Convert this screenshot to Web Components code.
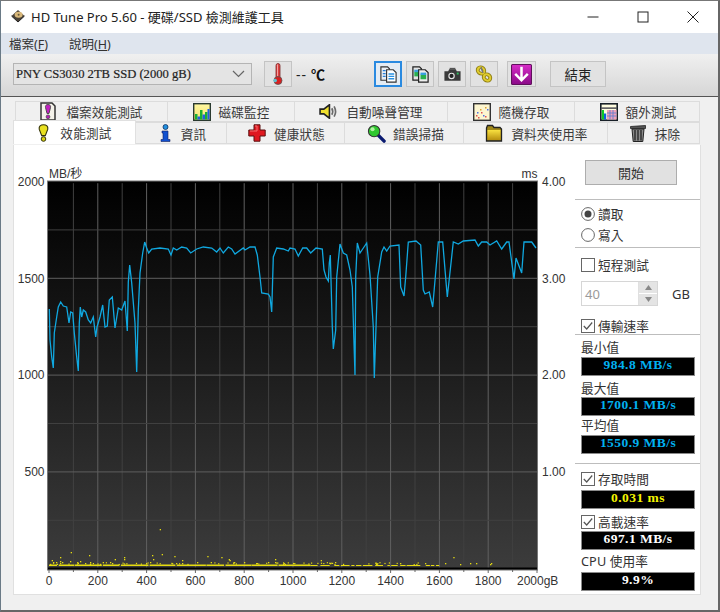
<!DOCTYPE html>
<html lang="zh-Hant"><head><meta charset="utf-8"><title>HD Tune Pro</title>
<style>
html,body{margin:0;padding:0;width:720px;height:612px;overflow:hidden;background:#fff}
body{font:12.5px "Noto Sans","Noto Sans CJK TC",sans-serif;color:#333}
</style></head><body>
<ht-app></ht-app>
<script>
const CJK='"Noto Sans","Noto Sans CJK TC",sans-serif';
const ICONS={
disk:`<svg viewBox="0 0 14 14"><path d="M7 1 13.500 7 7 13 .5 7Z" fill="#4a4238"/><ellipse cx="7.600" cy="5.800" rx="4" ry="3" fill="#d9b87a"/><circle cx="7.600" cy="5.800" r="1" fill="#6b5a3a"/><path d="M.5 7 7 13l6.500-6" fill="none" stroke="#222"/></svg>`,
thermo:`<svg viewBox="0 0 18 24"><rect x="7" y="1.500" width="4" height="15" rx="2" fill="#e04040" stroke="#7a2a2a" stroke-width=".8"/><rect x="8" y="2.500" width="1" height="12" fill="#f4a0a0"/><circle cx="9" cy="18.500" r="4" fill="#d82020" stroke="#555" stroke-width=".8"/><circle cx="6.200" cy="18.500" r="1.800" fill="#60c0d0"/></svg>`,
docs1:`<svg viewBox="0 0 20 20"><path d="M2 2h7l2 2v12H2Z" fill="#e8eef4" stroke="#333" stroke-width="1.200"/><path d="M8 5h7l3 3v10H8Z" fill="#fff" stroke="#333" stroke-width="1.200"/><path d="M4 6h3M4 9h3M4 12h3" stroke="#2a80d8" stroke-width="1.400"/><path d="M10 9.500h6M10 12h6M10 14.500h6" stroke="#2a90e0" stroke-width="1.400"/></svg>`,
docs2:`<svg viewBox="0 0 20 20"><path d="M2 2h7l2 2v12H2Z" fill="#e4e4e4" stroke="#222" stroke-width="1.300"/><path d="M8 5h7l3 3v10H8Z" fill="#eee" stroke="#222" stroke-width="1.300"/><rect x="3.500" y="7" width="4" height="5" fill="#2ab050"/><rect x="3.500" y="5" width="4" height="2.500" fill="#38a0e0"/><rect x="10" y="10" width="6" height="5" fill="#2ab050"/><rect x="10" y="8" width="6" height="2.500" fill="#38a0e0"/></svg>`,
camera:`<svg viewBox="0 0 20 20"><path d="M1.500 6.500h4l1-2h7l1 2h4v10h-17Z" fill="#3a3a3a"/><rect x="7" y="3" width="6" height="2" fill="#555"/><circle cx="9" cy="11.500" r="3.400" fill="#e8e8e8"/><circle cx="9" cy="11.500" r="2.200" fill="#222"/><rect x="14.500" y="8" width="2" height="2" fill="#30c060"/></svg>`,
chain:`<svg viewBox="0 0 20 20"><g fill="none" stroke="#8a7a10" stroke-width="3.800"><ellipse cx="7" cy="6.500" rx="3.500" ry="3" transform="rotate(40 7 6.500)"/><ellipse cx="13" cy="13.500" rx="3.500" ry="3" transform="rotate(40 13 13.500)"/></g><g fill="none" stroke="#e0cc30" stroke-width="2"><ellipse cx="7" cy="6.500" rx="3.500" ry="3" transform="rotate(40 7 6.500)"/><ellipse cx="13" cy="13.500" rx="3.500" ry="3" transform="rotate(40 13 13.500)"/></g><path d="M7 3 9 9" stroke="#777" stroke-width="1.500"/></svg>`,
down:`<svg viewBox="0 0 20 20"><defs><linearGradient id="m" x1="0" y1="0" x2="0" y2="1"><stop offset="0" stop-color="#d82cc8"/><stop offset="1" stop-color="#8a0a88"/></linearGradient></defs><rect x=".5" y=".5" width="19" height="19" rx="1" fill="url(#m)" stroke="#60105c"/><path d="M10 2.500v13M4 9.500 10 15.500 16 9.500" fill="none" stroke="#fff" stroke-width="2.400"/></svg>`,
filex:`<svg viewBox="0 0 16 19"><path d="M1 1h11l3 3v14H1Z" fill="#f4f2ea" stroke="#333" stroke-width="1.500"/><path d="M8 2.500c2.200 0 2.800 1.500 2.500 3L9 11.500H7L5.500 5.500C5.200 4 5.800 2.500 8 2.500Z" fill="#c020c0" stroke="#444" stroke-width=".9"/><circle cx="8" cy="14.800" r="1.900" fill="#b020b0" stroke="#444" stroke-width=".7"/></svg>`,
chart:`<svg viewBox="0 0 18 18"><defs><linearGradient id="c" x1="0" y1="0" x2="0" y2="1"><stop offset="0" stop-color="#fff8a0"/><stop offset="1" stop-color="#f4e070"/></linearGradient></defs><rect x=".7" y=".7" width="16.600" height="16.600" fill="url(#c)" stroke="#2a3a30" stroke-width="1.400"/><path d="M2 16.500V11h2.500v5.500Zm5 0V7h2.500v9.500Zm5 0V9h2.500v7.500Z" fill="#18b030"/><path d="M4.500 16.500v-3H7v3Zm5 0v-5H12v5Zm5 0V6H16.500v10.500Z" fill="#2060e0"/></svg>`,
speaker:`<svg viewBox="0 0 20 16"><path d="M1 5.500h4L11 .8v14.400L5 10.500H1Z" fill="#f0e030" stroke="#222" stroke-width="1.700"/><path d="M13.500 4.500q2 3.500 0 7M16 2.500q3 5.500 0 11" fill="none" stroke="#6a6a6a" stroke-width="1.800"/></svg>`,
random:`<svg viewBox="0 0 18 18"><rect x=".7" y=".7" width="16.600" height="16.600" fill="#fdf6d0" stroke="#333" stroke-width="1.400"/><g fill="#e05050"><rect x="3" y="12" width="1.500" height="1.500"/><rect x="8" y="9" width="1.500" height="1.500"/><rect x="12" y="13" width="1.500" height="1.500"/><rect x="5" y="14" width="1.500" height="1.500"/></g><g fill="#5070e0"><rect x="4" y="9" width="1.500" height="1.500"/><rect x="10" y="12" width="1.500" height="1.500"/><rect x="14" y="6" width="1.500" height="1.500"/></g><g fill="#e0a030"><rect x="12" y="4" width="1.500" height="1.500"/><rect x="7" y="6" width="1.500" height="1.500"/></g></svg>`,
extra:`<svg viewBox="0 0 18 18"><rect x=".8" y=".8" width="16.400" height="16.400" fill="#fffde0" stroke="#182028" stroke-width="1.600"/><rect x="1.500" y="4.500" width="15" height="1.200" fill="#223"/><rect x="1.800" y="7" width="2.200" height="9.500" fill="#10c828"/><rect x="4" y="10.500" width="2.200" height="6" fill="#1060e0"/><rect x="7" y="7" width="9.500" height="9.500" fill="#f0a0b8"/><path d="M7 10h9.500M7 13h9.500M10 7v9.500M13 7v9.500" stroke="#6080d0" stroke-width=".9"/></svg>`,
excl:`<svg viewBox="0 0 11 18"><path d="M5.500 .8c3 0 4.700 1.700 4.300 4.400L7.300 11.600H3.700L1.200 5.200C.8 2.500 2.500.8 5.500.8Z" fill="#e8e020" stroke="#33330a" stroke-width="1.100"/><circle cx="5.500" cy="15" r="2.300" fill="#d8d010" stroke="#33330a"/></svg>`,
info:`<svg viewBox="0 0 11 18"><circle cx="5.500" cy="3" r="2.500" fill="#2090e0" stroke="#103060" stroke-width=".8"/><path d="M2 7h6v8.500h2V17.500H1V15.500h2V9H2Z" fill="#1050d0" stroke="#102060" stroke-width=".6"/></svg>`,
cross:`<svg viewBox="0 0 18 18"><path d="M6 .8h6v5.200h5.200v6H12v5.200H6V12H.8V6H6Z" fill="#e01820" stroke="#5a1010"/><path d="M7 2h2v5H2" fill="none" stroke="#f47070"/></svg>`,
search:`<svg viewBox="0 0 20 20"><path d="M12 12 18 18" stroke="#0a1a70" stroke-width="3.600" stroke-linecap="round"/><circle cx="7.500" cy="7.500" r="6" fill="#30c830" stroke="#333" stroke-width="1.100"/><circle cx="5.800" cy="5.500" r="2.200" fill="#b0f0a0"/></svg>`,
folder:`<svg viewBox="0 0 18 18"><defs><linearGradient id="f" x1="0" y1="0" x2="0" y2="1"><stop offset="0" stop-color="#f8e040"/><stop offset="1" stop-color="#b89010"/></linearGradient></defs><path d="M1.500 4 2.500 1.500h5L9 3.500h6l1.500 1.500v12H1.500Z" fill="#a08818" stroke="#222" stroke-width="1.300"/><rect x="2.500" y="6" width="13" height="10" fill="url(#f)"/></svg>`,
trash:`<svg viewBox="0 0 18 18"><path d="M1.500 2.500 16.500 1.500V4.500H1.500Z" fill="#555" stroke="#222" stroke-width=".8"/><path d="M3 5h12l-1.200 12.500H4.200Z" fill="#8a8a8a" stroke="#222"/><path d="M6 6v10.500M9 6v10.500M12 6v10.500" stroke="#222" stroke-width="1.300"/></svg>`
};
function def(name,css,html,extra){
  const t=document.createElement('template');
  t.innerHTML=`<style>${css}</style>${html}`;
  customElements.define(name,class extends HTMLElement{
    connectedCallback(){
      if(this.shadowRoot)return;
      const r=this.attachShadow({mode:'open'});
      r.appendChild(t.content.cloneNode(true));
      if(extra)extra.call(this,r);
    }
  });
}
def('ht-icon',':host{display:inline-flex;flex:none}svg{display:block;width:100%;height:100%}','<span style="display:contents"></span>',function(r){
  r.querySelector('span').innerHTML=ICONS[this.getAttribute('name')]||'';
  const w=this.getAttribute('w')||16,h=this.getAttribute('h')||w;
  this.style.width=w+'px';this.style.height=h+'px';
});
def('ht-titlebar',`:host{display:flex;align-items:center;height:33px;background:#fff;flex:none;box-sizing:border-box;padding-left:10px;font:13px ${CJK};color:#222}
 .t{margin:0 0 2px 6px;white-space:nowrap}.s{flex:1}.b{width:50px;height:32px;display:flex;align-items:center;justify-content:center}svg{width:12px;height:12px;display:block}
 ht-icon{margin-bottom:2px}`,
 `<ht-icon name="disk" w="14"></ht-icon><span class="t">HD Tune Pro 5.60 - 硬碟/SSD 檢測維護工具</span><span class="s"></span>
 <span class="b"><svg viewBox="0 0 12 12"><path d="M.5 6h11" stroke="#222" fill="none"/></svg></span>
 <span class="b"><svg viewBox="0 0 12 12"><rect x="1" y="1" width="10" height="10" stroke="#222" fill="none"/></svg></span>
 <span class="b"><svg viewBox="0 0 12 12"><path d="M.5.500 11.500 11.500M11.500.500 .5 11.500" stroke="#222" fill="none"/></svg></span>`);
def('ht-menubar',`:host{display:flex;height:21px;background:#dfe5ee;flex:none;align-items:center;padding-left:8px;gap:21px;font:12.500px ${CJK};color:#333}u{text-decoration:underline}`,
 `<span>檔案(<u>F</u>)</span><span>說明(<u>H</u>)</span>`);
def('ht-tool',`:host{display:flex;flex:none;align-items:center;justify-content:center;box-sizing:border-box;height:26px;width:28px;border:1.500px solid #c4c4c4;background:#e2e2e2;font:13.500px ${CJK};color:#222}
 :host([on]){border:2px solid #2a8ae0;background:#e4ecf4}`,'<slot></slot>');
def('ht-combo',`:host{display:flex;flex:none;align-items:center;box-sizing:border-box;width:239px;height:22px;border:1px solid #b4b4b4;background:#e4e4e4;padding-left:2px;font:12.600px "Liberation Serif",serif;color:#222;-webkit-text-stroke:.2px #222}
 .s{flex:1;white-space:nowrap}svg{width:13px;height:8px;margin-right:6px}`,
 `<span class="s">PNY CS3030 2TB SSD (2000 gB)</span><svg viewBox="0 0 13 8"><path d="M1 1l5.500 5.500L12 1" fill="none" stroke="#666" stroke-width="1.200"/></svg>`);
def('ht-toolbar',`:host{display:flex;align-items:center;height:43px;flex:none;box-sizing:border-box;padding:0 0 2px 12px;background:linear-gradient(#f0f0f0,#d6d6d6);border-bottom:1px solid #555;font:13px ${CJK};color:#222}
 .temp{display:flex;align-items:center;flex:none;width:82px;box-sizing:border-box;padding-left:4px;white-space:nowrap}.m{letter-spacing:1px;font-size:14px}.c{font:bold 14px "Noto Sans CJK TC",sans-serif;margin-left:4px;color:#111}`,
 `<ht-combo></ht-combo><ht-tool style="margin-left:12px"><ht-icon name="thermo" w="18" h="24"></ht-icon></ht-tool><span class="temp"><span class="m">--</span><span class="c">℃</span></span>
 <ht-tool on><ht-icon name="docs1" w="19"></ht-icon></ht-tool>
 <ht-tool style="margin-left:4px"><ht-icon name="docs2" w="19"></ht-icon></ht-tool>
 <ht-tool style="margin-left:4px"><ht-icon name="camera" w="19"></ht-icon></ht-tool>
 <ht-tool style="margin-left:4px"><ht-icon name="chain" w="20"></ht-icon></ht-tool>
 <ht-tool style="margin-left:9px;width:29px"><ht-icon name="down" w="21"></ht-icon></ht-tool>
 <ht-tool style="margin-left:14px;width:56px">結束</ht-tool>`);
def('ht-tab',`:host{display:flex;flex:none;align-items:center;justify-content:center;gap:var(--g,8px);box-sizing:border-box;height:100%;border:1px solid #dcdcdc;border-left:0;background:#f0f0f0;color:#3a3a3a;font:12.600px ${CJK};letter-spacing:.1px;white-space:nowrap}
 :host([active]){background:#fff;border:1px solid #e0e0e0;border-bottom:0;height:24px;align-self:flex-end;z-index:1;letter-spacing:.25px}`,'<slot name="icon"></slot><slot></slot>');
def('ht-tabs',`:host{display:block;flex:none;background:#f0f0f0;padding-top:4px;height:48px;box-sizing:border-box;padding-left:14px;overflow:visible;position:relative}
 .r{display:flex;height:21px}.r2{height:22px;margin-left:-2px;margin-top:0}
 .r1{border-left:1px solid #dcdcdc}`,
 `<div class="r r1">
 <ht-tab style="width:152px;--g:10px"><ht-icon slot="icon" name="filex" w="16" h="19"></ht-icon>檔案效能測試</ht-tab>
 <ht-tab style="width:127px"><ht-icon slot="icon" name="chart" w="18"></ht-icon>磁碟監控</ht-tab>
 <ht-tab style="width:153px"><ht-icon slot="icon" name="speaker" w="19" h="15"></ht-icon>自動噪聲管理</ht-tab>
 <ht-tab style="width:127px"><ht-icon slot="icon" name="random" w="18"></ht-icon>隨機存取</ht-tab>
 <ht-tab style="width:125px;padding-left:2px"><ht-icon slot="icon" name="extra" w="18"></ht-icon>額外測試</ht-tab></div>
 <div class="r r2">
 <ht-tab active style="width:123px;--g:11px;padding-left:1px"><ht-icon slot="icon" name="excl" w="11" h="18"></ht-icon>效能測試</ht-tab>
 <ht-tab style="width:91px;--g:10px;padding-left:4px"><ht-icon slot="icon" name="info" w="11" h="18"></ht-icon>資訊</ht-tab>
 <ht-tab style="width:118px;padding-left:2px"><ht-icon slot="icon" name="cross" w="18"></ht-icon>健康狀態</ht-tab>
 <ht-tab style="width:119px;--g:7px;padding-left:3px"><ht-icon slot="icon" name="search" w="19"></ht-icon>錯誤掃描</ht-tab>
 <ht-tab style="width:144px;padding-left:2px"><ht-icon slot="icon" name="folder" w="18"></ht-icon>資料夾使用率</ht-tab>
 <ht-tab style="width:92px;padding-left:2px"><ht-icon slot="icon" name="trash" w="18"></ht-icon>抹除</ht-tab></div>`);
def('ht-chart',`:host{display:block;flex:none;width:561px;height:449px}svg{display:block;width:561px;height:449px}text{font:12px "Liberation Sans",sans-serif;fill:#333}.cjk{font-family:"Liberation Sans","Noto Sans CJK TC",sans-serif}`,
 `<svg viewBox="14 145 561 449"><defs><linearGradient id="bg" x1="0" y1="0" x2="0" y2="1"><stop offset="0" stop-color="#000"/><stop offset="1" stop-color="#3c3c3c"/></linearGradient></defs><g id="g"></g></svg>`,
 function(r){
  const pts="49.3,309 50,340 51.7,357 53.3,368 54.3,333 56.7,317 58.3,307 60.7,302 63.3,306 66.7,307 69,323 70.7,312 72.7,313 74.3,333 76.7,357 78.3,371 79.3,323 80.3,307 81.7,317 83.3,310 85.7,312 88.3,320 90.7,323 93.3,317 95.7,337 97,327 100,317 102.7,305 105,327 107.3,326 109.3,300 112.3,297 115,328 118.3,308 121.7,310 125,301 127.3,331 128.3,282 129.7,265 131.7,283 135,323 136.7,372 138.3,310 140,273 142.700,253 144.700,242 146.700,248 148.700,253 151.700,249 160,248 168.300,249 171,255 173.300,248 176.700,250 181.700,247 186.700,248 190.700,253 196.700,249 203.300,247 211.700,248 216.700,252 220,248 223.300,253 228.300,247 231.700,249 235,254 243.300,248 245,250 250,247 255,247 257.300,255 260,277 261.700,293 268.300,294 270,297 271.700,312 273.300,257 276.700,248 283.300,249 288.300,251 290,248 295,249 298.300,256 302.700,248 306.700,248 310.700,253 316,248 322.300,249 324,270 326,277 328.300,281 329.300,263 330.300,255 331,280 332.300,327 333.300,349 335.700,330 336.700,277 340,244 343.300,253 346.700,255 350,270 352.300,287 354.300,353 355,375 355.700,277 357.300,243 360,253 366.700,243 370,275 373.300,327 374.300,378 376,327 377.700,277 381.700,252 384,247 386.700,251 390,246 399,245 400.700,287 404,296 405.700,277 408.300,242 416,241 420.700,245 423.300,290 425,294 429.300,292 432.700,307 435.300,277 438.300,242 442.700,242 447.300,297 453.300,242 458.300,244 463.300,241 475,240 478.300,246 481.700,242 486.700,242 490,245 496.700,241 501.700,249 506.700,242 509,242 514,279 516,258 521.700,273 524,242 531.700,242 536,248";
  let s=`<rect x="47.500" y="181" width="490" height="389" fill="url(#bg)"/>`;
  for(let i=1;i<20;i++){const x=49+i*24.4;const maj=i%2==0;s+=`<line x1="${x}" x2="${x}" y1="182" y2="568" stroke="${maj?'#606060':'#414141'}" stroke-width="1"/>`;}
  for(let i=1;i<8;i++){const y=181.500+i*48.400;const maj=i%2==0;s+=`<line x1="48" x2="537" y1="${y}" y2="${y}" stroke="${maj?'#5e5e5e':'#404040'}"/>`;}
  s+=`<rect x="47" y="567.500" width="491" height="2.500" fill="#000"/>`;
  let seed=7;const rnd=()=>(seed=(seed*16807)%2147483647)/2147483647;
  let yl='';
  for(let x=49;x<292;x+=0){const w=8+rnd()*26;yl+=`<rect x="${x.toFixed(1)}" y="564.500" width="${w.toFixed(1)}" height="1.500"/>`;x+=w+(rnd()*2);}
  for(let x=292;x<410;x+=0){const w=2+rnd()*8;yl+=`<rect x="${x.toFixed(1)}" y="565" width="${w.toFixed(1)}" height="1"/>`;x+=w+rnd()*5;}
  for(let x=410;x<440;x+=0){const w=1+rnd()*6;yl+=`<rect x="${x.toFixed(1)}" y="565" width="${w.toFixed(1)}" height="1"/>`;x+=w+rnd()*6;}
  const out="159.700,529 70.700,552 89,555 60,557 60,561 152,555 161.700,554 174.300,556 207.300,556 221.300,557 124,557 124,559 114.700,559 153,559 182,560 228.700,559 229.500,560 275,559 275,562 320.700,560 453.300,557 102.700,562 70,561 80,561 51.700,560 150,562 210.700,562 234,562 197,562 110,562 112,563 90,562 85,563 53,562 56,562 60,563 62,562 244,562 268,562 256,563 330,563 335,562 400,563 425,563 460,564 470,563 476,563 490,564 491,563 445,563 182,563 176,563 146,563";
  out.split(' ').forEach(p=>{const[a,b]=p.split(',');yl+=`<rect x="${a}" y="${b}" width="1.300" height="1.300"/>`;});
  for(let i=0;i<70;i++){const x=49+rnd()*370;yl+=`<rect x="${x.toFixed(1)}" y="${(562+rnd()*2).toFixed(1)}" width="1.200" height="1.200"/>`;}
  s+=`<g fill="#e6dc10">${yl}</g>`;
  s+=`<polyline points="${pts}" fill="none" stroke="#10a8e0" stroke-width="1.300"/>`;
  s+=`<rect x="47.500" y="181" width="490" height="389" fill="none" stroke="#777" stroke-width="1"/><rect x="48.500" y="182" width="488" height="1.200" fill="#000"/>`;
  for(let i=0;i<=20;i++){const x=49+i*24.4;s+=`<line x1="${x}" x2="${x}" y1="570" y2="${i%2?572:573}" stroke="#666"/>`;}
  [[2000,"4.00",186],[1500,"3.00",282.500],[1000,"2.00",379],[500,"1.00",476]].forEach(([a,b,y])=>{
    s+=`<text x="44.500" y="${y}" text-anchor="end">${a}</text><text x="542" y="${y}">${b}</text>`;
  });
  for(let i=0;i<10;i++){s+=`<text x="${49+i*48.800}" y="584.500" text-anchor="middle">${i*200}</text>`;}
  s+=`<text x="517" y="584.500">2000gB</text><text class="cjk" x="49" y="177.500">MB/秒</text><text x="521.500" y="178">ms</text>`;
  r.getElementById('g').innerHTML=s;
 });
def('ht-check',`:host{display:flex;align-items:center;gap:3px;height:16px;font:12.700px ${CJK};color:#333;letter-spacing:.1px;white-space:nowrap}
 svg{width:14px;height:14px;flex:none;display:block}slot{display:block;margin-top:-2px}`,
 `<svg viewBox="0 0 14 14"><rect x=".5" y=".5" width="13" height="13" fill="#fff" stroke="#666"/><path class="k" d="M2.800 7 5.700 10 11.200 3.500" fill="none" stroke="#555" stroke-width="1.200"/></svg><slot></slot>`,
 function(r){if(!this.hasAttribute('checked'))r.querySelector('.k').remove();});
def('ht-radio',`:host{display:flex;align-items:center;gap:3px;height:20px;font:12.700px ${CJK};color:#333;letter-spacing:.1px;white-space:nowrap}
 svg{width:14px;height:14px;flex:none;display:block}slot{display:block;margin-top:-2px}`,
 `<svg viewBox="0 0 14 14"><circle cx="7" cy="7" r="6.400" fill="#fff" stroke="#666"/><circle class="k" cx="7" cy="7" r="3.500" fill="#444"/></svg><slot></slot>`,
 function(r){if(!this.hasAttribute('checked'))r.querySelector('.k').remove();});
def('ht-value',`:host{display:flex;align-items:flex-start;justify-content:center;box-sizing:border-box;width:114px;height:19px;background:#000;border:1px solid #8a8a8a;font:bold 13.500px/14px "Liberation Serif",serif;letter-spacing:.45px;color:var(--c,#fff);white-space:nowrap}`,'<slot></slot>');
def('ht-label',`:host{display:flex;align-items:center;height:16px;font:12.700px ${CJK};color:#333;letter-spacing:.1px;white-space:nowrap}slot{display:block;margin-top:-2px}`,'<slot></slot>');
def('ht-sep',`:host{display:block;height:1px;background:#bdbdbd;margin-left:-6px;width:125px}`,'');
def('ht-spin',`:host{display:flex;align-items:center;height:25px;font:12.700px ${CJK}}
 .i{box-sizing:border-box;width:77px;height:25px;border:1px solid #d6d6d6;display:flex;background:#fff;color:#9a9a9a;align-items:center;padding-left:3px;font-size:13px}
 .n{flex:1}.a{width:18px;height:100%;display:flex;flex-direction:column;gap:1px;background:#fff;border-left:1px solid #e0e0e0}
 .a span{flex:1;background:#e4e4e4;display:flex;align-items:center;justify-content:center}svg{width:7px;height:5px}
 .g{margin-left:14px;font-size:13px;color:#333}`,
 `<div class="i"><span class="n">40</span><div class="a"><span><svg viewBox="0 0 7 5"><path d="M3.500 0 7 5H0Z" fill="#888"/></svg></span><span><svg viewBox="0 0 7 5"><path d="M3.500 5 7 0H0Z" fill="#888"/></svg></span></div></div><span class="g">GB</span>`);
def('ht-btn',`:host{display:flex;align-items:center;justify-content:center;box-sizing:border-box;width:92px;height:25px;margin-left:4px;background:#e1e1e1;border:1px solid #adadad;font:13px ${CJK};color:#333}`,'<slot></slot>');
def('ht-side',`:host{display:block;flex:none;width:125px;box-sizing:border-box;padding-left:6px}`,
 `<ht-btn style="margin-top:15px">開始</ht-btn>
 <ht-sep style="margin-top:14px"></ht-sep>
 <ht-radio checked style="margin-top:4px">讀取</ht-radio>
 <ht-radio style="margin-top:1px">寫入</ht-radio>
 <ht-sep style="margin-top:2px"></ht-sep>
 <ht-check style="margin-top:9px">短程測試</ht-check>
 <ht-spin style="margin-top:8px"></ht-spin>
 <ht-check checked style="margin-top:12px">傳輸速率</ht-check>
 <ht-sep></ht-sep>
 <ht-label style="margin-top:4px">最小值</ht-label>
 <ht-value style="margin-top:2px;--c:#00b0f0">984.8 MB/s</ht-value>
 <ht-label style="margin-top:4px">最大值</ht-label>
 <ht-value style="margin-top:1px;--c:#00b0f0">1700.1 MB/s</ht-value>
 <ht-label style="margin-top:1px">平均值</ht-label>
 <ht-value style="margin-top:2px;--c:#00b0f0">1550.9 MB/s</ht-value>
 <ht-sep style="margin-top:9px"></ht-sep>
 <ht-check checked style="margin-top:7px">存取時間</ht-check>
 <ht-value style="margin-top:3px;--c:#f4f400">0.031 ms</ht-value>
 <ht-check checked style="margin-top:5px">高載速率</ht-check>
 <ht-value style="margin-top:1px;--c:#fff">697.1 MB/s</ht-value>
 <ht-label style="margin-top:3px">CPU 使用率</ht-label>
 <ht-value style="margin-top:3px;--c:#fff">9.9%</ht-value>`);
def('ht-panel',`:host{display:flex;flex:none;box-sizing:border-box;margin-left:12px;width:688px;height:450px;background:#fff;border:1px solid #e0e0e0;border-top:0}`,'<ht-chart></ht-chart><ht-side></ht-side>');
def('ht-app',`:host{display:flex;flex-direction:column;box-sizing:border-box;width:720px;height:612px;background:#f0f0f0;border-top:1px solid #777;border-left:1px solid #6a7a86;border-right:2px solid #666;border-bottom:2px solid #666;overflow:hidden}`,
 `<ht-titlebar style="height:32px"></ht-titlebar><ht-menubar></ht-menubar><ht-toolbar></ht-toolbar><ht-tabs></ht-tabs><ht-panel></ht-panel>`);
</script>
</body></html>
